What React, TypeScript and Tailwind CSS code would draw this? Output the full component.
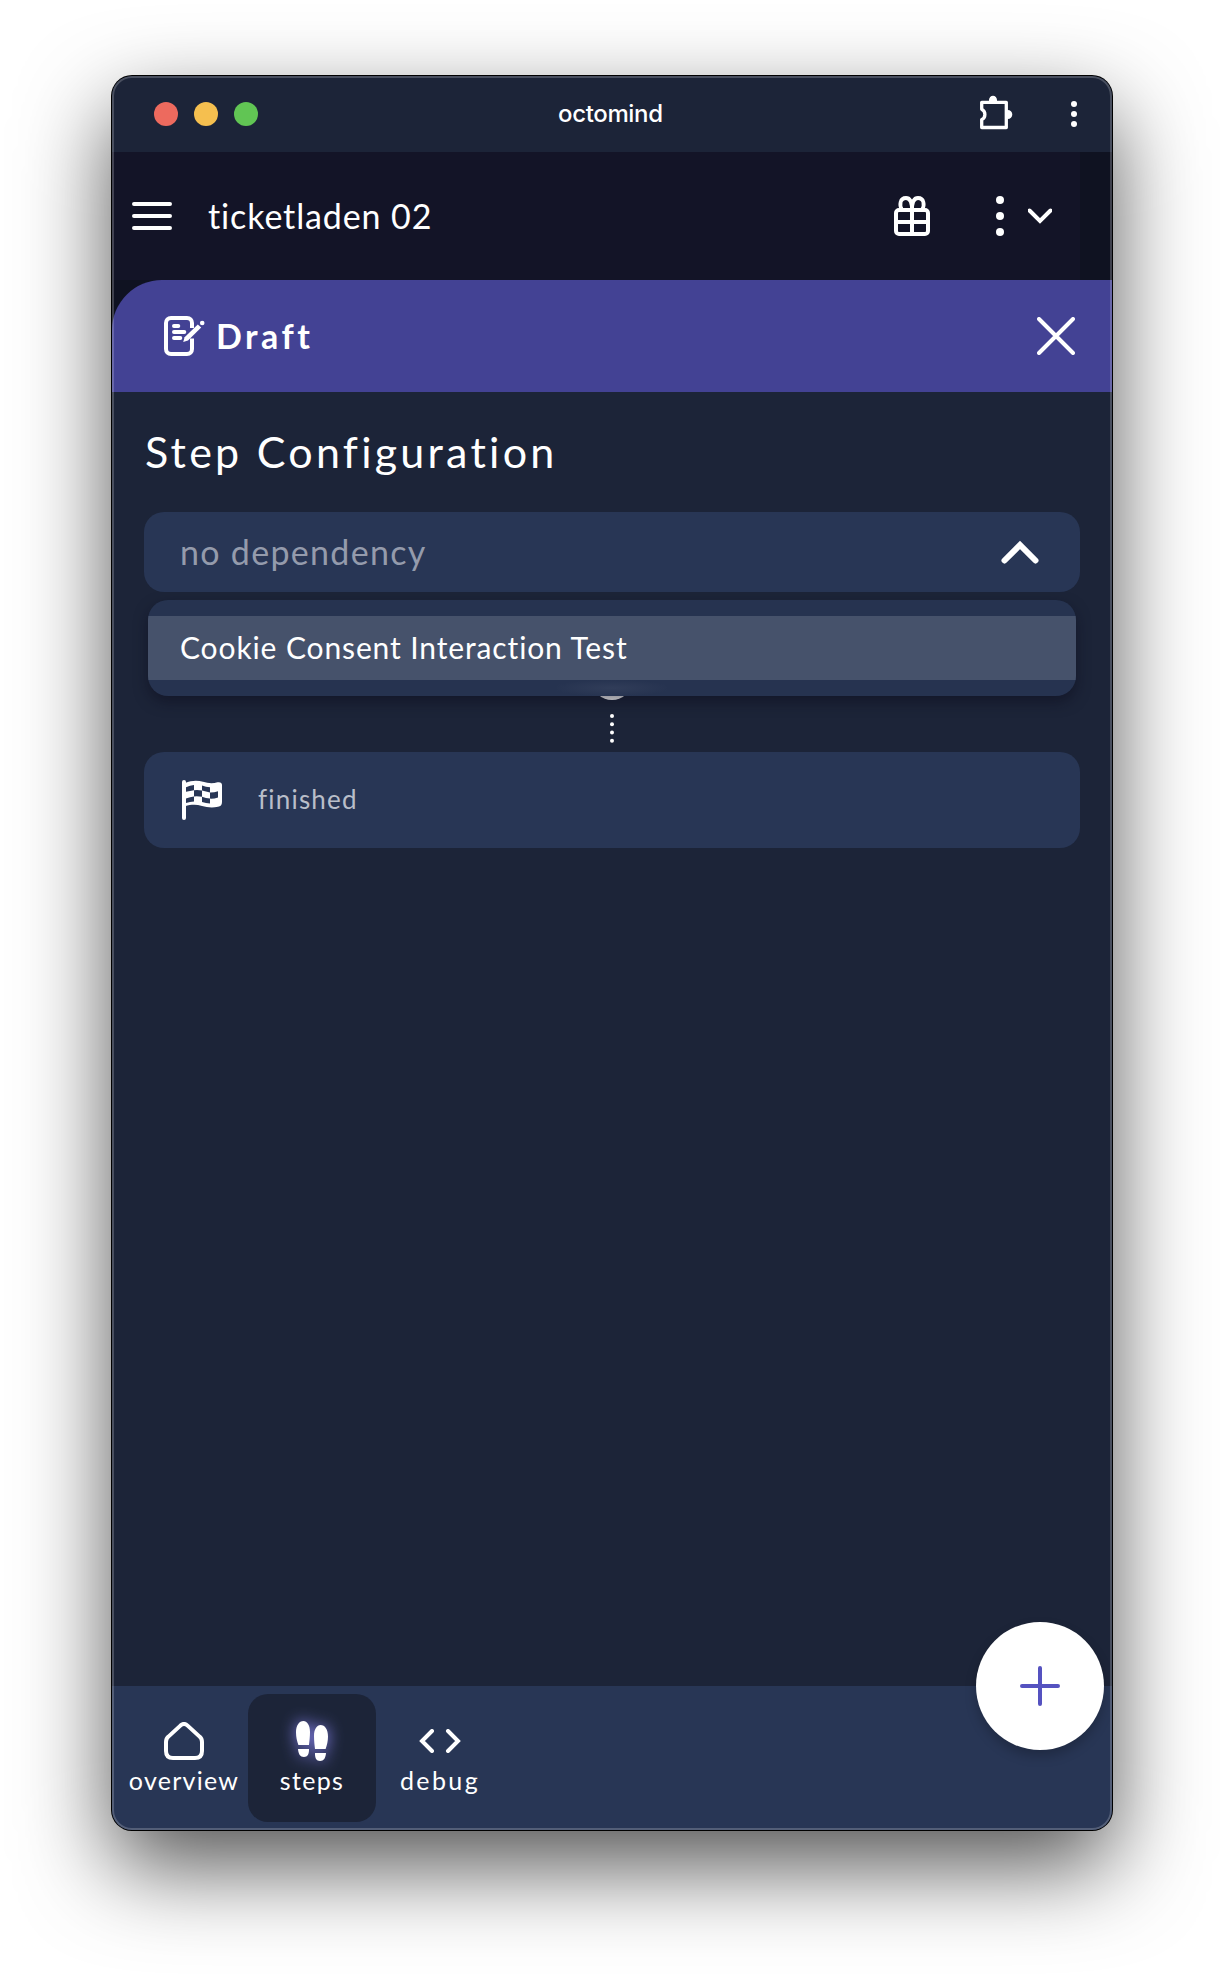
import React from 'react';

const stroke = {
  fill: 'none',
  stroke: 'currentColor',
  strokeWidth: 4,
  strokeLinecap: 'round' as const,
  strokeLinejoin: 'round' as const,
};

function PuzzleIcon() {
  return (
    <svg width="36" height="36" viewBox="0 0 36 36" fill="none">
      <path
        d="M3.7 7.3H28.3V32.5H3.7V24.6C6 23.4 6.9 21.4 6.9 19.4C6.9 17.4 6 15.4 3.7 14.2Z"
        stroke="white"
        strokeWidth="3.3"
        strokeLinejoin="round"
      />
      <path d="M11 6V5a4 4.3 0 0 1 8 0v1zM29 15h.8a4 4 0 0 1 0 9H29z" fill="white" />
    </svg>
  );
}

function MenuIcon() {
  return (
    <svg width="40" height="28" viewBox="0 0 40 28" {...stroke}>
      <path d="M2 2H38M2 14H38M2 26H38" />
    </svg>
  );
}

function GiftIcon() {
  return (
    <svg width="36" height="40" viewBox="0 0 36 40" {...stroke}>
      <rect x="2" y="14" width="32" height="24" rx="3" />
      <path d="M18 14V38M2 26H34" />
      <path d="M8 14C5 9 6 2 12 2C16 2 18 6 18 14M28 14C31 9 30 2 24 2C20 2 18 6 18 14" strokeWidth="3.8" />
    </svg>
  );
}

function DraftIcon() {
  return (
    <svg width="41" height="40" viewBox="0 0 41 40" {...stroke}>
      <path d="M28 12V7C28 4 26 2 23 2H7C4 2 2 4 2 7V33C2 36 4 38 7 38H23C26 38 28 36 28 33V22.5" strokeLinecap="butt" />
      <path d="M10 10H14.3M10 16H20.3M10 22H16.3" />
      <path d="M19.2 26L20.6 21.2L33.8 8.4L37.2 11.6L24 24.4Z" fill="white" stroke="none" />
      <circle cx="38.2" cy="7" r="2.3" fill="white" stroke="none" />
    </svg>
  );
}

function FlagIcon() {
  return (
    <svg width="40" height="40" viewBox="0 0 40 40">
      <path d="M2 2V38" {...stroke} />
      <path
        d="M3 3C10 0 16 .2 21 1.8C26 3.4 31 3.6 35.5 2.3C38.5 1.7 40 3 40 5V22C40 25 38.5 26.5 36 26.8C30 28 25 27.4 20 26C14 24.2 9 24.6 3 26.2Z"
        fill="white"
      />
      <path
        d="M4 7.2Q8 5.6 12 5V10.2Q8 10.7 4 11.8ZM20 5.4Q24 6.8 28 7.2V12.4Q24 11.8 20 10.6ZM12 10.2Q16 9.6 20 10.6V16.8Q16 16 12 16.4ZM28 12.4Q32 12.5 36 11.2V17.4Q32 18.8 28 18.6ZM4 18.4Q8 17 12 16.4V21.6Q8 21.8 4 23ZM20 16.8Q24 18.2 28 18.6V23.6Q24 23.3 20 22Z"
        fill="#283655"
      />
    </svg>
  );
}

function HomeIcon() {
  return (
    <svg width="40" height="38" viewBox="0 0 40 38" {...stroke}>
      <path d="M16.4 3.6L4.4 14.6C2.8 16 2 17.8 2 20V29C2 33.5 4.5 36 9 36H31C35.5 36 38 33.5 38 29V20C38 17.8 37.2 16 35.6 14.6L23.6 3.6C21.4 1.6 18.6 1.6 16.4 3.6Z" />
    </svg>
  );
}

function StepsIcon() {
  return (
    <svg
      width="32"
      height="40"
      viewBox="0 0 32 40"
      fill="white"
      className="overflow-visible drop-shadow-[0_0_8px_#8480e8]"
    >
      <path d="M7.5 0C11 0 14 4 14 11C14 16 13.4 20 13 24H2.4C1 20 0 16 0 11.5C0 4.5 3 0 7.5 0ZM2 28H13C13.2 33 11.6 36 8 36C4.2 36 2.4 33 2 28Z" />
      <path d="M24.5 4C29 4 32 8.5 32 15.5C32 20 31 24 29.6 28H19C18.6 24 18 20 18 15C18 8 21 4 24.5 4ZM19 32H30C29.6 37 27.8 40 24 40C20.4 40 18.8 37 19 32Z" />
    </svg>
  );
}

function CodeIcon() {
  return (
    <svg width="42" height="24" viewBox="0 0 42 24" {...stroke} strokeLinejoin="miter">
      <path d="M13 2L3 12L13 22M29 2L39 12L29 22" />
    </svg>
  );
}

function NavItem({ icon, label, active }: { icon: React.ReactNode; label: React.ReactNode; active?: boolean }) {
  return (
    <div
      className={
        active
          ? 'flex h-32 w-32 flex-col items-center rounded-[20px] bg-[#1c2438] pt-[27px]'
          : 'flex h-32 w-32 flex-col items-center pt-[27px]'
      }
    >
      <div className="flex h-10 items-center">{icon}</div>
      <div className="mt-[3px] text-[25px] leading-[32px] whitespace-nowrap">{label}</div>
    </div>
  );
}

export default function App() {
  return (
    <div className="h-[1978px] w-[1224px] overflow-hidden bg-white px-28 pt-[76px] font-['Lato',sans-serif] text-white">
      <div className="relative flex h-[1754px] w-[1000px] flex-col overflow-hidden rounded-[20px] bg-[#1c2438] shadow-[0_0_0_1px_#000,0_36px_90px_rgba(0,0,0,0.68)]">
        <div className="flex h-[76px] shrink-0 items-center bg-[#1c2438] pl-[42px]">
          <div className="flex w-[404px] gap-4">
            <div className="size-6 rounded-full bg-[#ed6a5e]" />
            <div className="size-6 rounded-full bg-[#f5bf4f]" />
            <div className="size-6 rounded-full bg-[#61c554]" />
          </div>
          <div className="w-[420px] font-['Inter',sans-serif] text-[24px] leading-none font-medium tracking-[-0.35px]">
            octomind
          </div>
          <div className="pb-0.5">
            <PuzzleIcon />
          </div>
          <svg className="ml-[57px]" width="6" height="26" viewBox="0 0 6 26" fill="white">
            <circle cx="3" cy="3" r="3" />
            <circle cx="3" cy="13" r="3" />
            <circle cx="3" cy="23" r="3" />
          </svg>
        </div>

        <div className="flex h-32 shrink-0 bg-[#0f1221]">
          <div className="flex w-[968px] items-center bg-[#131427] pl-5">
            <MenuIcon />
            <div className="ml-9 w-[686px] pb-0.5 text-[34px] tracking-[0.88px]">ticketladen 02</div>
            <GiftIcon />
            <svg className="ml-[66px]" width="8" height="40" viewBox="0 0 8 40" fill="white">
              <circle cx="4" cy="4" r="4" />
              <circle cx="4" cy="20" r="4" />
              <circle cx="4" cy="36" r="4" />
            </svg>
            <svg className="ml-6" width="24" height="16" viewBox="0 0 24 16" {...stroke} strokeLinejoin="miter">
              <path d="M1.5 2.5L12 13L22.5 2.5" />
            </svg>
          </div>
        </div>

        <div className="shrink-0 bg-[#0f1221]">
          <div className="flex h-28 items-center rounded-tl-[50px] bg-[#434294] pr-[37px] pl-[52px]">
            <DraftIcon />
            <div className="ml-[11px] pb-0.5 text-[34px] font-bold tracking-[3.5px]">Draft</div>
            <svg className="ml-auto" width="38" height="38" viewBox="0 0 38 38" {...stroke}>
              <path d="M2 2L36 36M36 2L2 36" />
            </svg>
          </div>
        </div>

        <div className="flex min-h-0 flex-1 flex-col px-8">
          <h1 className="flex h-[120px] items-center pl-px text-[43px] tracking-[3.25px]">Step Configuration</h1>
          <div className="relative">
            <div className="flex h-20 items-center justify-between rounded-[20px] bg-[#283655] pr-[41px] pl-9">
              <span className="pb-0.5 text-[34px] tracking-[1.3px] text-[#949bac]">no dependency</span>
              <svg width="38" height="24" viewBox="0 0 38 24" {...stroke} strokeLinejoin="miter">
                <path d="M3.5 20.5L19 5L34.5 20.5" strokeWidth="6" />
              </svg>
            </div>
            <div className="absolute top-[88px] right-1 left-1 z-10 h-24 overflow-hidden rounded-[20px] bg-[#263350] py-4 shadow-[0_6px_14px_rgba(12,12,28,0.5)]">
              <div className="flex h-16 items-center bg-[#46526b] pb-0.5 pl-8 text-[30px] tracking-[0.88px]">
                Cookie Consent Interaction Test
              </div>
              <div className="mx-auto h-4 w-[110px] bg-[radial-gradient(ellipse_at_center,#313d59,#263350_75%)]" />
            </div>
          </div>
          <div className="flex h-[160px] flex-col items-center pt-[68px]">
            <div className="size-10 shrink-0 rounded-full bg-white" />
            <svg className="mt-[14px]" width="4" height="29" viewBox="0 0 4 29" fill="white">
              <circle cx="2" cy="2" r="2" />
              <circle cx="2" cy="10.3" r="2" />
              <circle cx="2" cy="18.5" r="2" />
              <circle cx="2" cy="26.7" r="2" />
            </svg>
          </div>
          <div className="flex h-24 items-center rounded-[20px] bg-[#283655] pl-[38px]">
            <FlagIcon />
            <span className="ml-9 pb-0.5 text-[26px] tracking-[1.2px] text-[#b9bec9]">finished</span>
          </div>
        </div>

        <div className="relative flex h-36 shrink-0 bg-[#283655] px-2 pt-2">
          <NavItem icon={<HomeIcon />} label={<span className="tracking-[1.25px]">overview</span>} />
          <NavItem active icon={<StepsIcon />} label={<span className="tracking-[1.3px]">steps</span>} />
          <NavItem icon={<CodeIcon />} label={<span className="tracking-[2.4px]">debug</span>} />
          <button className="absolute -top-16 right-2 flex size-32 items-center justify-center rounded-full bg-white text-[#5552c0] shadow-[0_6px_12px_rgba(0,0,0,0.22)]">
            <svg width="40" height="40" viewBox="0 0 40 40" {...stroke}>
              <path d="M20 2V38M2 20H38" />
            </svg>
          </button>
        </div>
        <div className="pointer-events-none absolute inset-0 z-20 rounded-[20px] border-2 border-white/20" />
      </div>
    </div>
  );
}
